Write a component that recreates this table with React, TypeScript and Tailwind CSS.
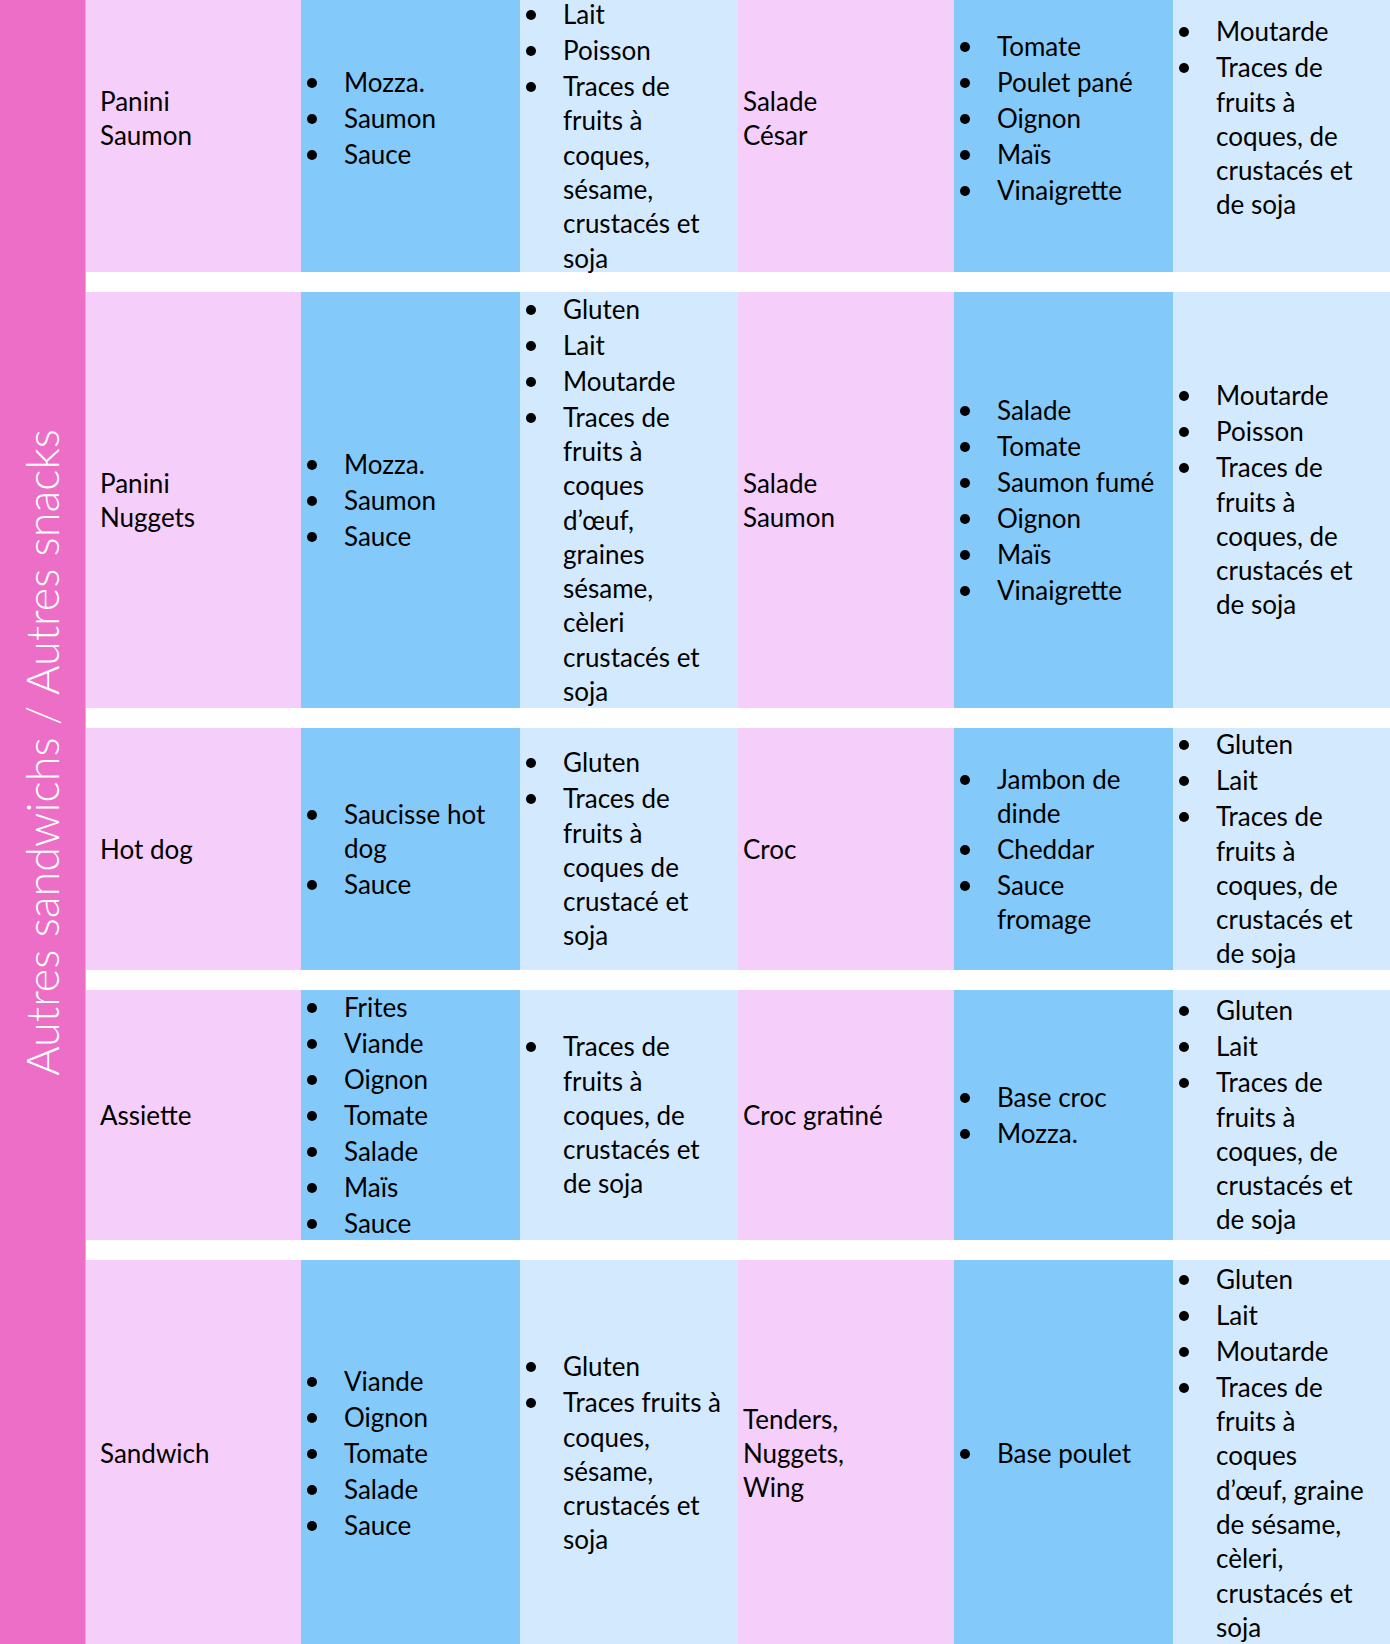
import React from "react";

type Row = {
  h: string;
  name: string;
  ing: string[];
  all: string[];
  name2: string;
  ing2: string[];
  all2: string[];
};

const traces = "Traces de\nfruits à\ncoques, de\ncrustacés et\nde soja";

const rows: Row[] = [
  {
    h: "h-[308px]",
    name: "Panini\nSaumon",
    ing: ["Mozza.", "Saumon", "Sauce"],
    all: ["Gluten", "Lait", "Poisson", "Traces de\nfruits à\ncoques,\nsésame,\ncrustacés et\nsoja"],
    name2: "Salade\nCésar",
    ing2: ["Tomate", "Poulet pané", "Oignon", "Maïs", "Vinaigrette"],
    all2: ["Moutarde", traces],
  },
  {
    h: "h-[416px]",
    name: "Panini\nNuggets",
    ing: ["Mozza.", "Saumon", "Sauce"],
    all: [
      "Gluten",
      "Lait",
      "Moutarde",
      "Traces de\nfruits à\ncoques\nd’œuf,\ngraines\nsésame,\ncèleri\ncrustacés et\nsoja",
    ],
    name2: "Salade\nSaumon",
    ing2: ["Salade", "Tomate", "Saumon fumé", "Oignon", "Maïs", "Vinaigrette"],
    all2: ["Moutarde", "Poisson", traces],
  },
  {
    h: "h-[242px]",
    name: "Hot dog",
    ing: ["Saucisse hot\ndog", "Sauce"],
    all: ["Gluten", "Traces de\nfruits à\ncoques de\ncrustacé et\nsoja"],
    name2: "Croc",
    ing2: ["Jambon de\ndinde", "Cheddar", "Sauce\nfromage"],
    all2: ["Gluten", "Lait", traces],
  },
  {
    h: "h-[250px]",
    name: "Assiette",
    ing: ["Frites", "Viande", "Oignon", "Tomate", "Salade", "Maïs", "Sauce"],
    all: [traces],
    name2: "Croc gratiné",
    ing2: ["Base croc", "Mozza."],
    all2: ["Gluten", "Lait", traces],
  },
  {
    h: "h-[386px]",
    name: "Sandwich",
    ing: ["Viande", "Oignon", "Tomate", "Salade", "Sauce"],
    all: ["Gluten", "Traces fruits à\ncoques,\nsésame,\ncrustacés et\nsoja"],
    name2: "Tenders,\nNuggets,\nWing",
    ing2: ["Base poulet"],
    all2: [
      "Gluten",
      "Lait",
      "Moutarde",
      "Traces de\nfruits à\ncoques\nd’œuf, graine\nde sésame,\ncèleri,\ncrustacés et\nsoja",
    ],
  },
];

const Bullets = ({ items }: { items: string[] }) => (
  <ul className="flex flex-col gap-[1.7px]">
    {items.map((it, i) => (
      <li key={i} className="flex">
        <span className="flex h-[34.3px] w-[43px] shrink-0 items-center pl-[6px] pt-[2px]">
          <span className="h-[10px] w-[10px] rounded-full bg-black" />
        </span>
        <span className="whitespace-pre-line">{it}</span>
      </li>
    ))}
  </ul>
);

const App = () => {
  return (
    <div className="flex h-[1644px] w-[1390px] overflow-hidden bg-white font-['Lato','Noto_Sans',sans-serif] text-[26px] leading-[34.3px] text-black">
      <div className="flex w-[86px] shrink-0 items-center justify-center border-r border-[#f4a0dc] bg-[#ec6ec6] pb-[140px]">
        <span className="rotate-180 whitespace-nowrap text-[45px] font-light leading-none text-white [writing-mode:vertical-rl]">
          Autres sandwichs / Autres snacks
        </span>
      </div>
      <div className="-mt-[36px] flex flex-1 flex-col gap-[20px]">
        {rows.map((r, i) => (
          <div key={i} className={`flex shrink-0 ${r.h}`}>
            <div className="flex w-[215px] items-center bg-[#f5cefa] pl-[14px]">
              <p className="whitespace-pre-line">{r.name}</p>
            </div>
            <div className="flex w-[219px] items-center bg-[#83c9f9]">
              <Bullets items={r.ing} />
            </div>
            <div className="flex w-[218px] items-center bg-[#d3e9fd]">
              <Bullets items={r.all} />
            </div>
            <div className="flex w-[216px] items-center bg-[#f5cefa] pl-[5px]">
              <p className="whitespace-pre-line">{r.name2}</p>
            </div>
            <div className="flex w-[219px] items-center bg-[#83c9f9]">
              <Bullets items={r.ing2} />
            </div>
            <div className="flex w-[217px] items-center bg-[#d3e9fd]">
              <Bullets items={r.all2} />
            </div>
          </div>
        ))}
      </div>
    </div>
  );
};

export default App;
